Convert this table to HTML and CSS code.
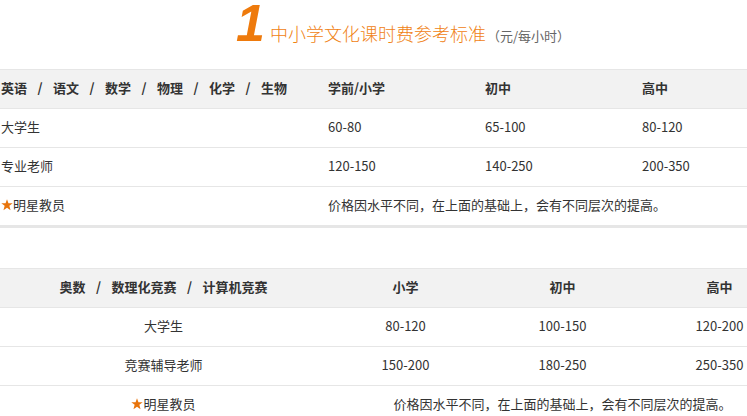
FILE: index.html
```html
<!DOCTYPE html>
<html lang="zh-CN">
<head>
<meta charset="utf-8">
<title>中小学文化课时费参考标准</title>
<link rel="stylesheet" href="styles.css">
</head>
<body>
<div class="page">
  <div class="title">
    <span class="num">1</span>
    <span class="name">中小学文化课时费参考标准</span>
    <span class="unit">（元/每小时）</span>
  </div>

  <table class="fee fee-left">
    <colgroup><col class="c1"><col class="c2"><col class="c2"><col class="c2"></colgroup>
    <thead>
      <tr>
        <th>英语<span class="sep">/</span>语文<span class="sep">/</span>数学<span class="sep">/</span>物理<span class="sep">/</span>化学<span class="sep">/</span>生物</th>
        <th>学前/小学</th>
        <th>初中</th>
        <th>高中</th>
      </tr>
    </thead>
    <tbody>
      <tr><td>大学生</td><td>60-80</td><td>65-100</td><td>80-120</td></tr>
      <tr><td>专业老师</td><td>120-150</td><td>140-250</td><td>200-350</td></tr>
      <tr class="last">
        <td><svg class="star" viewBox="0 0 12 12" width="12" height="12"><polygon points="6,0.3 7.45,4.2 11.7,4.3 8.35,6.85 9.55,11.2 6,8.7 2.45,11.2 3.65,6.85 0.3,4.3 4.55,4.2"/></svg>明星教员</td>
        <td colspan="3">价格因水平不同，在上面的基础上，会有不同层次的提高。</td>
      </tr>
    </tbody>
  </table>

  <table class="fee fee-center">
    <colgroup><col class="c1"><col class="c2"><col class="c2"><col class="c2"></colgroup>
    <thead>
      <tr>
        <th>奥数<span class="sep">/</span>数理化竞赛<span class="sep">/</span>计算机竞赛</th>
        <th>小学</th>
        <th>初中</th>
        <th>高中</th>
      </tr>
    </thead>
    <tbody>
      <tr><td>大学生</td><td>80-120</td><td>100-150</td><td>120-200</td></tr>
      <tr><td>竞赛辅导老师</td><td>150-200</td><td>180-250</td><td>250-350</td></tr>
      <tr>
        <td><svg class="star" viewBox="0 0 12 12" width="12" height="12"><polygon points="6,0.3 7.45,4.2 11.7,4.3 8.35,6.85 9.55,11.2 6,8.7 2.45,11.2 3.65,6.85 0.3,4.3 4.55,4.2"/></svg>明星教员</td>
        <td colspan="3">价格因水平不同，在上面的基础上，会有不同层次的提高。</td>
      </tr>
    </tbody>
  </table>
</div>
</body>
</html>
```
FILE: styles.css
```css
html, body {
  margin: 0;
  padding: 0;
  overflow: hidden;
  background: #fff;
}
body {
  font-family: "Noto Sans CJK SC", "Noto Sans", sans-serif;
  font-size: 13px;
  color: #333;
}
.page {
  width: 798px;
}
.title {
  height: 69px;
  box-sizing: border-box;
  padding-left: 8px;
  display: flex;
  justify-content: center;
  align-items: baseline;
}
.num {
  font-family: "Liberation Sans", Arial, sans-serif;
  font-size: 52px;
  line-height: 46px;
  font-weight: bold;
  font-style: italic;
  color: #ee7a0c;
  margin-right: 5px;
}
.name {
  font-size: 18px;
  font-weight: 300;
  color: #f08214;
}
.unit {
  font-size: 13px;
  color: #666;
  margin-left: 1px;
}
.fee {
  width: 798px;
  table-layout: fixed;
  border-collapse: collapse;
  border-top: 1px solid #e6e6e6;
}
.fee col.c1 { width: 327px; }
.fee col.c2 { width: 157px; }
.fee th, .fee td {
  height: 34px;
  padding: 0 0 4px 0;
  vertical-align: middle;
  white-space: nowrap;
  border-bottom: 1px solid #e6e6e6;
}
.fee th {
  background: #f2f2f2;
  font-weight: bold;
}
.fee-left th, .fee-left td {
  text-align: left;
  padding-left: 1px;
}
.fee-left tr.last td {
  border-bottom: 3px solid #e6e6e6;
}
.fee-center {
  margin-top: 40px;
}
.fee-center th, .fee-center td {
  text-align: center;
}
.sep {
  display: inline-block;
  width: 26px;
  text-align: center;
}
.star {
  fill: #e8740c;
  vertical-align: -1px;
}
```
